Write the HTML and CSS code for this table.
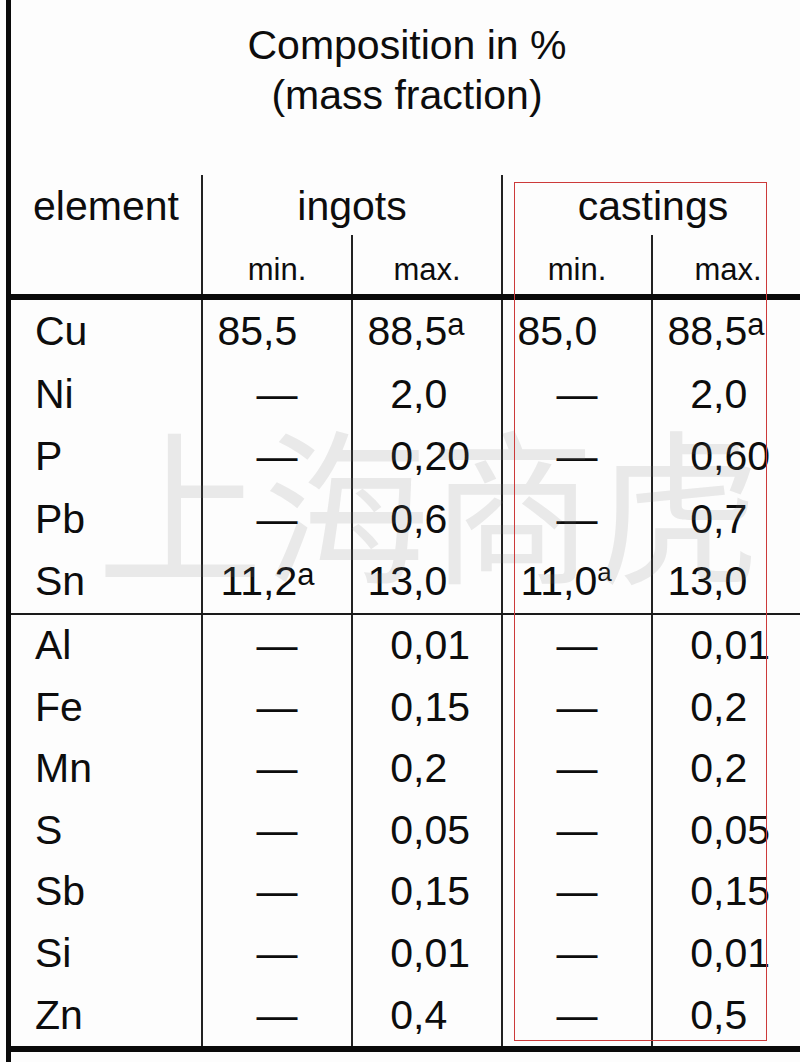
FILE: index.html
```html
<!DOCTYPE html>
<html lang="en">
<head>
<meta charset="utf-8">
<title>Composition in %</title>
<link rel="stylesheet" href="styles.css">
</head>
<body>
<div class="sheet">
  <div class="title">Composition in %<br>(mass fraction)</div>
  <div class="head">
    <div class="hcell el-head">element</div>
    <div class="hcell grp sep">ingots</div>
    <div class="hcell grp">castings</div>
    <div class="sub sep">min.</div>
    <div class="sub sep">max.</div>
    <div class="sub sep">min.</div>
    <div class="sub">max.</div>
  </div>
  <div class="group g1">
    <div class="row"><div class="c el">Cu</div><div class="c n"><span class="i">85</span>,5</div><div class="c n"><span class="i">88</span>,5<sup>a</sup></div><div class="c n"><span class="i">85</span>,0</div><div class="c n last"><span class="i">88</span>,5<sup>a</sup></div></div>
    <div class="row"><div class="c el">Ni</div><div class="c d">—</div><div class="c n"><span class="i">2</span>,0</div><div class="c d">—</div><div class="c n last"><span class="i">2</span>,0</div></div>
    <div class="row"><div class="c el">P</div><div class="c d">—</div><div class="c n"><span class="i">0</span>,20</div><div class="c d">—</div><div class="c n last"><span class="i">0</span>,60</div></div>
    <div class="row"><div class="c el">Pb</div><div class="c d">—</div><div class="c n"><span class="i">0</span>,6</div><div class="c d">—</div><div class="c n last"><span class="i">0</span>,7</div></div>
    <div class="row"><div class="c el">Sn</div><div class="c n"><span class="i">11</span>,2<sup>a</sup></div><div class="c n"><span class="i">13</span>,0</div><div class="c n"><span class="i">11</span>,0<sup class="small">a</sup></div><div class="c n last"><span class="i">13</span>,0</div></div>
  </div>
  <div class="group g2">
    <div class="row"><div class="c el">Al</div><div class="c d">—</div><div class="c n"><span class="i">0</span>,01</div><div class="c d">—</div><div class="c n last"><span class="i">0</span>,01</div></div>
    <div class="row"><div class="c el">Fe</div><div class="c d">—</div><div class="c n"><span class="i">0</span>,15</div><div class="c d">—</div><div class="c n last"><span class="i">0</span>,2</div></div>
    <div class="row"><div class="c el">Mn</div><div class="c d">—</div><div class="c n"><span class="i">0</span>,2</div><div class="c d">—</div><div class="c n last"><span class="i">0</span>,2</div></div>
    <div class="row"><div class="c el">S</div><div class="c d">—</div><div class="c n"><span class="i">0</span>,05</div><div class="c d">—</div><div class="c n last"><span class="i">0</span>,05</div></div>
    <div class="row"><div class="c el">Sb</div><div class="c d">—</div><div class="c n"><span class="i">0</span>,15</div><div class="c d">—</div><div class="c n last"><span class="i">0</span>,15</div></div>
    <div class="row"><div class="c el">Si</div><div class="c d">—</div><div class="c n"><span class="i">0</span>,01</div><div class="c d">—</div><div class="c n last"><span class="i">0</span>,01</div></div>
    <div class="row"><div class="c el">Zn</div><div class="c d">—</div><div class="c n"><span class="i">0</span>,4</div><div class="c d">—</div><div class="c n last"><span class="i">0</span>,5</div></div>
  </div>
  <div class="watermark">上海商虎</div>
  <div class="highlight"></div>
</div>
</body>
</html>
```
FILE: styles.css
```css
html, body {
  margin: 0;
  padding: 0;
  width: 800px;
  height: 1062px;
  overflow: hidden;
  background: #fdfdfd;
}

body {
  font-family: "Liberation Sans", Arial, sans-serif;
  color: #0d0d0d;
}

.sheet {
  position: relative;
  margin-left: 6px;
  width: 797px;
  height: 1062px;
  border-left: 5px solid #0a0a0a;
  box-sizing: border-box;
  font-size: 41px;
}

.title {
  height: 175px;
  box-sizing: border-box;
  padding-top: 20px;
  line-height: 50px;
  text-align: center;
}

.head {
  display: grid;
  grid-template-columns: 192px 150px 150px 150px 150px;
  grid-template-rows: 60px 59px;
  border-bottom: 6px solid #0a0a0a;
  width: 792px;
}

.hcell {
  box-sizing: border-box;
  padding-top: 3px;
  line-height: 57px;
  text-align: center;
}

.el-head {
  grid-row: 1 / span 2;
  border-right: 2px solid #222;
}

.grp {
  grid-column: span 2;
}

.sep {
  border-right: 2px solid #222;
}

.sub {
  box-sizing: border-box;
  font-size: 31px;
  padding-top: 11px;
  line-height: 48px;
  text-align: center;
}

.group {
  width: 792px;
}

.g1 {
  border-bottom: 2px solid #1a1a1a;
}

.g2 {
  border-bottom: 6px solid #0a0a0a;
}

.row {
  display: grid;
  grid-template-columns: 192px 150px 150px 150px 150px;
}

.g1 .row {
  height: 62.6px;
  line-height: 62.6px;
}

.g2 .row {
  height: 61.6px;
  line-height: 61.6px;
}

.c {
  box-sizing: border-box;
  border-right: 2px solid #222;
  white-space: nowrap;
}

.c.last {
  border-right: none;
}

.el {
  padding-left: 24px;
}

.d {
  text-align: center;
}

.i {
  display: inline-block;
  width: 60px;
  text-align: right;
}

sup {
  font-size: 31px;
  line-height: 0;
  vertical-align: 10px;
}

sup.small {
  font-size: 26px;
  vertical-align: 14px;
}

.watermark {
  position: absolute;
  left: 86px;
  top: 416px;
  font-family: "Noto Sans CJK SC", sans-serif;
  font-size: 166px;
  line-height: 1;
  color: rgba(120, 120, 120, 0.15);
  white-space: nowrap;
  pointer-events: none;
}

.highlight {
  position: absolute;
  left: 503px;
  top: 182px;
  width: 253px;
  height: 859px;
  box-sizing: border-box;
  border: 1.5px solid #cc3a3a;
  pointer-events: none;
}
```
